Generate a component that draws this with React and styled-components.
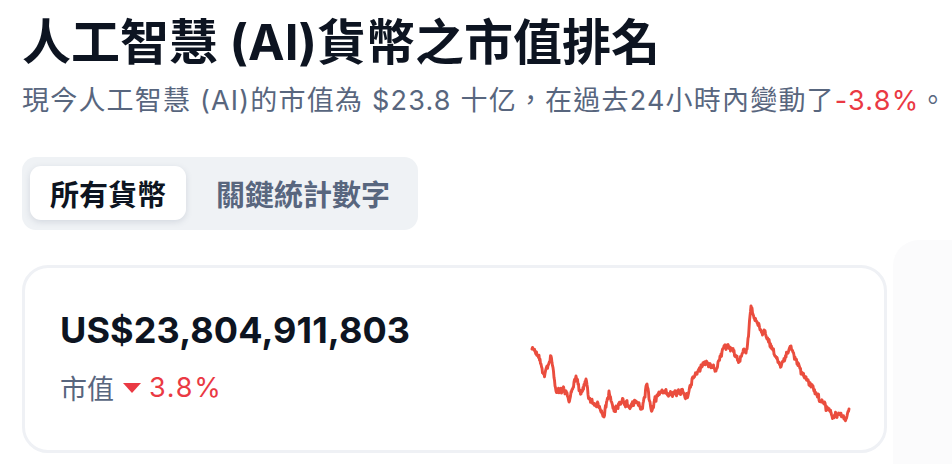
import styled, { createGlobalStyle } from "styled-components";

const GlobalStyle = createGlobalStyle`
  body {
    margin: 0;
    background: #ffffff;
    font-family: Inter, "Noto Sans CJK TC", sans-serif;
    color: #0d1421;
  }
`;

const Page = styled.div`
  width: 952px;
  height: 464px;
  overflow: hidden;
  padding: 12px 0 0 22px;
  box-sizing: border-box;
`;

const Title = styled.h1`
  margin: 0;
  font-size: 49px;
  line-height: 62px;
  font-weight: 700;
  color: #0d1421;
  white-space: nowrap;
`;

const Subtitle = styled.p`
  margin: 9px 0 0;
  font-size: 27px;
  line-height: 36px;
  letter-spacing: 1.2px;
  color: #58667e;
  white-space: nowrap;
`;

const Red = styled.span`
  color: #ea3943;
`;

const Tabs = styled.div`
  display: inline-flex;
  align-items: center;
  gap: 10px;
  margin-top: 38px;
  padding: 9px 8px 10px 8px;
  background: #eff2f5;
  border-radius: 14px;
`;

const Tab = styled.div`
  padding: 0 20px;
  height: 54px;
  display: flex;
  align-items: center;
  font-size: 29px;
  font-weight: 700;
  border-radius: 11px;
  color: ${(p) => (p.$active ? "#0d1421" : "#58667e")};
  background: ${(p) => (p.$active ? "#ffffff" : "transparent")};
  box-shadow: ${(p) =>
    p.$active ? "0 2px 6px rgba(88, 102, 126, 0.18)" : "none"};
`;

const Row = styled.div`
  display: flex;
  align-items: flex-start;
  gap: 6px;
  margin-top: 35px;
`;

const Card = styled.div`
  width: 865px;
  height: 188px;
  flex: none;
  box-sizing: border-box;
  border: 3px solid #eff1f5;
  border-radius: 26px;
  display: flex;
  align-items: center;
  justify-content: space-between;
  padding: 0 32px 0 35px;
`;

const Peek = styled.div`
  flex: 1;
  height: 240px;
  margin-top: -25px;
  background: #fbfbfc;
  border-top-left-radius: 26px;
`;

const Stats = styled.div`
  display: flex;
  flex-direction: column;
  gap: 16px;
  margin-top: -4px;
`;

const Value = styled.div`
  font-size: 36px;
  font-weight: 700;
  color: #0d1421;
  letter-spacing: 0.1px;
`;

const Meta = styled.div`
  display: flex;
  align-items: center;
  gap: 9px;
  font-size: 27px;
  color: #58667e;
`;

const Change = styled.span`
  display: inline-flex;
  align-items: center;
  gap: 8px;
  letter-spacing: 1.8px;
  color: #ea3943;
`;

const Caret = styled.span`
  width: 0;
  height: 0;
  border-left: 9px solid transparent;
  border-right: 9px solid transparent;
  border-top: 10px solid #ea3943;
  margin-top: 2px;
`;

const ChartSvg = styled.svg`
  display: block;
  margin-top: 6px;
`;

// key points of the 7-day line, in card-local pixels
const keys = [
  [0, 45], [6, 52], [12, 70], [19, 52], [24, 87], [34, 87], [37, 98],
  [44, 72], [49, 90], [54, 75], [57, 95], [65, 100], [72, 113], [77, 87],
  [82, 107], [90, 97], [97, 103], [104, 97], [110, 105], [115, 80],
  [119, 105], [127, 88], [140, 90], [150, 87], [155, 93], [160, 75],
  [167, 65], [175, 58], [184, 67], [192, 42], [200, 45], [207, 57],
  [212, 45], [215, 45], [219, 2], [224, 17], [230, 28], [234, 32],
  [242, 50], [249, 63], [254, 53], [259, 42], [265, 60], [279, 83],
  [292, 100], [300, 112], [307, 110], [314, 115], [317, 105],
];

function buildPath() {
  let seed = 11;
  const rnd = () => {
    seed = (seed * 16807) % 2147483647;
    return seed / 2147483647 - 0.5;
  };
  const pts = [];
  let drift = 0;
  for (let i = 0; i < keys.length - 1; i++) {
    const [x0, y0] = keys[i];
    const [x1, y1] = keys[i + 1];
    for (let x = x0; x < x1; x += 0.5) {
      const t = (x - x0) / (x1 - x0);
      drift = drift * 0.55 + rnd() * 4;
      const y = y0 + (y1 - y0) * t + (t > 0 ? drift + rnd() * 4 : 0);
      pts.push([x, y]);
    }
  }
  pts.push(keys[keys.length - 1]);
  return pts
    .map(([x, y], i) => `${i ? "L" : "M"}${(x + 2).toFixed(1)} ${(y + 3).toFixed(1)}`)
    .join(" ");
}

const linePath = buildPath();

export default function App() {
  return (
    <>
      <GlobalStyle />
      <Page>
        <Title>人工智慧 (AI)貨幣之市值排名</Title>
        <Subtitle>
          現今人工智慧 (AI)的市值為 $23.8 十亿，在過去24小時內變動了
          <Red>-3.8%</Red>。
        </Subtitle>
        <Tabs>
          <Tab $active>所有貨幣</Tab>
          <Tab>關鍵統計數字</Tab>
        </Tabs>
        <Row>
          <Card>
            <Stats>
              <Value>US$23,804,911,803</Value>
              <Meta>
                市值
                <Change>
                  <Caret />
                  3.8%
                </Change>
              </Meta>
            </Stats>
            <ChartSvg width="322" height="122" viewBox="0 0 322 122">
              <path
                d={linePath}
                fill="none"
                stroke="#ea4d3e"
                strokeWidth="2.9"
                strokeLinejoin="round"
                strokeLinecap="round"
              />
            </ChartSvg>
          </Card>
          <Peek />
        </Row>
      </Page>
    </>
  );
}
